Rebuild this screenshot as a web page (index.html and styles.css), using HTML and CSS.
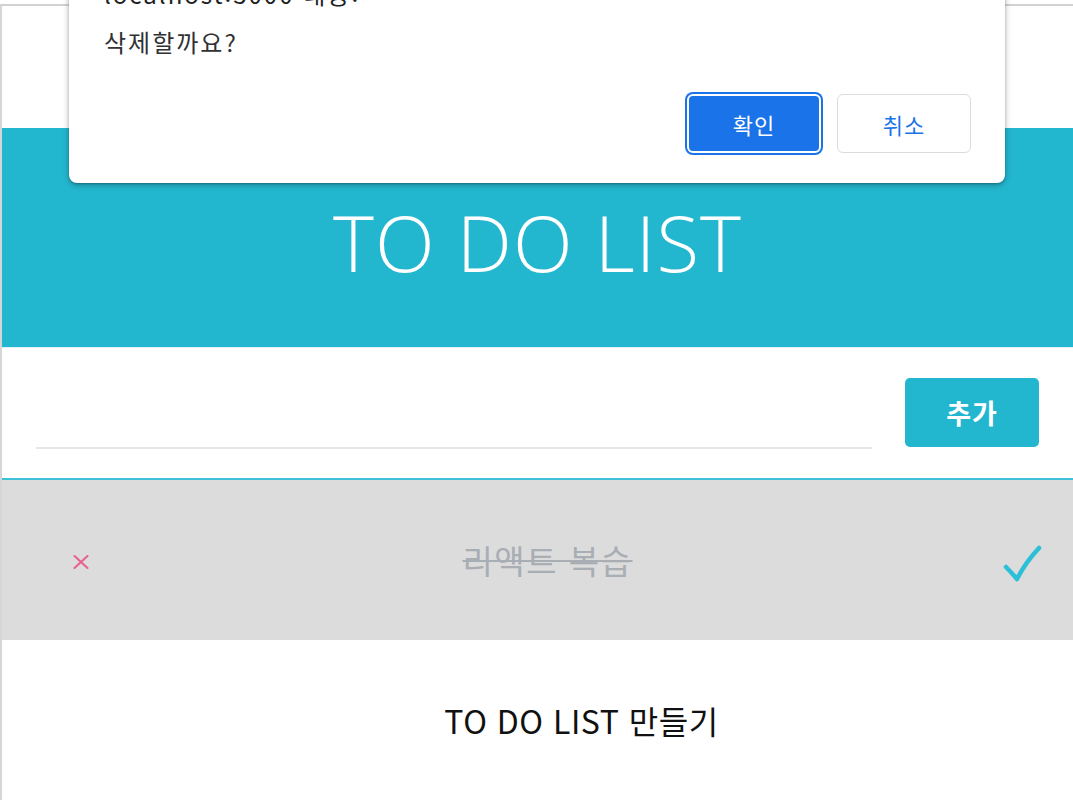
FILE: index.html
```html
<!DOCTYPE html>
<html lang="ko">
<head>
<meta charset="utf-8">
<title>TO DO LIST</title>
<link rel="stylesheet" href="styles.css">
</head>
<body>
<div class="app">
  <div class="spacer"></div>
  <header class="header">
    <h1 class="title">TO DO LIST</h1>
  </header>
  <form class="form">
    <input class="input" type="text">
    <button class="add" type="button">추가</button>
  </form>
  <ul class="list">
    <li class="item done">
      <span class="remove">
        <svg width="16" height="14" viewBox="0 0 16 14"><path d="M1.5 1 L14.5 13 M14.5 1 L1.5 13" stroke="#ea5f8c" stroke-width="2" stroke-linecap="round" fill="none"/></svg>
      </span>
      <span class="text">리액트 복습</span>
      <span class="check">
        <svg width="40" height="42" viewBox="0 0 40 42"><path d="M3 22 Q9 28 14 34 Q22 18 36 3" stroke="#2bbfd8" stroke-width="4.5" stroke-linecap="round" stroke-linejoin="round" fill="none"/></svg>
      </span>
    </li>
    <li class="item plain">
      <span class="text">TO DO LIST 만들기</span>
    </li>
  </ul>
</div>

<div class="dialog">
  <div class="dialog-title">localhost:3000 내용:</div>
  <div class="dialog-msg">삭제할까요?</div>
  <div class="dialog-actions">
    <button class="btn primary" type="button">확인</button>
    <button class="btn secondary" type="button">취소</button>
  </div>
</div>
</body>
</html>
```

FILE: styles.css
```css
* { box-sizing: border-box; }
html, body { margin: 0; padding: 0; background: #fff; overflow: hidden; }
body {
  font-family: "Noto Sans CJK KR", "Noto Sans", sans-serif;
  width: 1073px;
  height: 800px;
  position: relative;
}
.app {
  margin-top: 4px;
  border-top: 2px solid #d2d2d2;
  border-left: 2px solid #d6d6d6;
  height: 796px;
}
.spacer { height: 122px; }
.header {
  background: #23b7cf;
  height: 220px;
  display: flex;
  align-items: center;
  justify-content: center;
  border-bottom: 1px solid #dff3f6;
}
.title {
  margin: 0;
  color: #fff;
  font-family: "Open Sans", "Noto Sans", sans-serif;
  font-weight: 300;
  font-size: 78px;
  letter-spacing: 1px;
  line-height: 1;
  padding-top: 8px;
}
.form {
  display: flex;
  align-items: flex-end;
  height: 132px;
  padding: 0 34px 31px 34px;
  border-bottom: 2px solid #3fc2d8;
  gap: 33px;
}
.input {
  flex: 1;
  border: none;
  border-bottom: 2px solid #e6e6e6;
  height: 40px;
  outline: none;
  margin-bottom: -2px;
}
.add {
  width: 134px;
  height: 69px;
  border: none;
  border-radius: 5px;
  background: #23b7cf;
  color: #fff;
  font-family: "Noto Sans CJK KR", sans-serif;
  font-weight: 700;
  font-size: 27px;
  letter-spacing: 1px;
}
.list { list-style: none; margin: 0; padding: 0; }
.item {
  height: 160px;
  display: flex;
  align-items: center;
  font-size: 33px;
}
.done { background: #dcdcdc; }
.remove {
  width: 140px;
  padding-left: 71px;
  padding-top: 4px;
  display: flex;
  align-items: center;
}
.done .text {
  flex: 1;
  text-align: center;
  color: #a9adb4;
  text-decoration: line-through;
  text-decoration-thickness: 2px;
  letter-spacing: 1.5px;
}
.check {
  width: 120px;
  display: flex;
  justify-content: flex-start;
  padding-left: 50px;
  padding-top: 12px;
}
.plain { padding-left: 88px; justify-content: center; }
.plain .text {
  color: #111;
  font-size: 32px;
  letter-spacing: 0.5px;
}

.dialog {
  position: absolute;
  left: 69px;
  top: -40px;
  width: 936px;
  height: 223px;
  background: #fff;
  border-radius: 8px;
  box-shadow: 0 2px 6px rgba(0,0,0,0.3), 0 1px 2px rgba(0,0,0,0.2);
  padding: 19px 34px 0 35px;
}
.dialog-title {
  font-size: 24px;
  line-height: 30px;
  color: #202124;
  letter-spacing: 2px;
}
.dialog-msg {
  margin-top: 17px;
  font-size: 24px;
  line-height: 32px;
  color: #303134;
  letter-spacing: 2px;
}
.dialog-actions {
  display: flex;
  justify-content: flex-end;
  gap: 16px;
  margin-top: 36px;
}
.btn {
  width: 134px;
  height: 59px;
  border-radius: 6px;
  font-family: "Noto Sans CJK KR", sans-serif;
  font-size: 22px;
  letter-spacing: 1px;
}
.primary {
  background: #1a73e8;
  color: #fff;
  border: 2px solid #fff;
  box-shadow: 0 0 0 2px #1a73e8;
}
.secondary {
  background: #fff;
  color: #1a73e8;
  border: 1px solid #dadce0;
}
```
